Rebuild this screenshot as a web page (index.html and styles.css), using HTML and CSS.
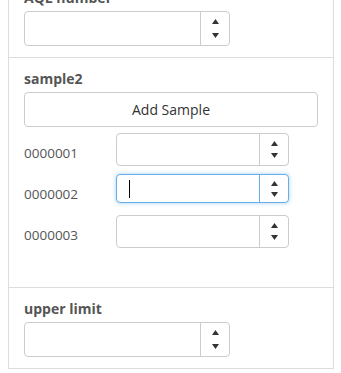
FILE: index.html
```html
<!DOCTYPE html>
<html lang="en">
<head>
    <meta charset="UTF-8">
    <meta name="viewport" content="width=device-width, initial-scale=1.0">
    <title>Inspection settings</title>
    <link rel="stylesheet" href="styles.css">
</head>
<body>
    <div class="panel">
        <div class="section">
            <div class="section-label">AQL number</div>
            <div class="num">
                <div class="field"></div>
                <div class="spin">
                    <svg width="7" height="5" viewBox="0 0 7 5"><path d="M3.5 0L7 5H0z"/></svg>
                    <svg width="7" height="5" viewBox="0 0 7 5"><path d="M0 0H7L3.5 5z"/></svg>
                </div>
            </div>
        </div>

        <div class="section sample-section">
            <div class="section-label">sample2</div>
            <button class="add-button">Add Sample</button>

            <div class="sample-list">
                <div class="sample-row">
                    <span class="sample-name">0000001</span>
                    <div class="num">
                        <div class="field"></div>
                        <div class="spin">
                            <svg width="7" height="5" viewBox="0 0 7 5"><path d="M3.5 0L7 5H0z"/></svg>
                            <svg width="7" height="5" viewBox="0 0 7 5"><path d="M0 0H7L3.5 5z"/></svg>
                        </div>
                    </div>
                </div>
                <div class="sample-row">
                    <span class="sample-name">0000002</span>
                    <div class="num focused">
                        <div class="field"><span class="caret"></span></div>
                        <div class="spin">
                            <svg width="7" height="5" viewBox="0 0 7 5"><path d="M3.5 0L7 5H0z"/></svg>
                            <svg width="7" height="5" viewBox="0 0 7 5"><path d="M0 0H7L3.5 5z"/></svg>
                        </div>
                    </div>
                </div>
                <div class="sample-row">
                    <span class="sample-name">0000003</span>
                    <div class="num">
                        <div class="field"></div>
                        <div class="spin">
                            <svg width="7" height="5" viewBox="0 0 7 5"><path d="M3.5 0L7 5H0z"/></svg>
                            <svg width="7" height="5" viewBox="0 0 7 5"><path d="M0 0H7L3.5 5z"/></svg>
                        </div>
                    </div>
                </div>
            </div>
        </div>

        <div class="section">
            <div class="section-label">upper limit</div>
            <div class="num">
                <div class="field"></div>
                <div class="spin">
                    <svg width="7" height="5" viewBox="0 0 7 5"><path d="M3.5 0L7 5H0z"/></svg>
                    <svg width="7" height="5" viewBox="0 0 7 5"><path d="M0 0H7L3.5 5z"/></svg>
                </div>
            </div>
        </div>
    </div>
</body>
</html>
```
FILE: styles.css
```css
body {
    margin: 0;
    background-color: #fff;
    font-family: "Open Sans", Arial, sans-serif;
    color: #555;
}
.panel {
    margin: -23px 0 0 8px;
    width: 324px;
    border-left: 1px solid #ddd;
    border-right: 1px solid #ddd;
}
.section {
    padding: 12px 15px 11px 15px;
    border-bottom: 1px solid #ddd;
}
.section-label {
    font-size: 14px;
    font-weight: 700;
    line-height: 18px;
    margin-bottom: 4px;
}
.num {
    display: flex;
    width: 206px;
    height: 35px;
    box-sizing: border-box;
    border: 1px solid #ccc;
    border-radius: 4px;
    background-color: #fff;
}
.field {
    flex: 1;
    display: flex;
    align-items: center;
    padding-left: 12px;
}
.spin {
    width: 28px;
    border-left: 1px solid #ccc;
    display: flex;
    flex-direction: column;
    align-items: center;
    justify-content: center;
    gap: 9px;
}
.spin svg {
    fill: #333;
}
.add-button {
    display: block;
    width: 100%;
    height: 35px;
    margin-bottom: 6px;
    background-color: #fff;
    border: 1px solid #ccc;
    border-radius: 4px;
    font-family: "Open Sans", Arial, sans-serif;
    font-size: 14px;
    color: #333;
}
.sample-section {
    padding-bottom: 39px;
}
.sample-list {
    display: flex;
    flex-direction: column;
    gap: 8px;
}
.sample-row {
    display: flex;
    align-items: flex-start;
    height: 33px;
}
.sample-name {
    width: 92px;
    font-size: 13.5px;
    line-height: 18px;
    padding-top: 11px;
}
.sample-row .num {
    width: 173px;
    height: 33px;
}
.sample-row .spin {
    gap: 7px;
}
.num.focused {
    height: 29px;
    border-color: #66afe9;
    box-shadow: 0 0 4px rgba(102, 175, 233, 0.6);
}
.num.focused .spin {
    border-left-color: #66afe9;
    gap: 6px;
}
.caret {
    display: block;
    width: 1px;
    height: 18px;
    background-color: #000;
}
```
